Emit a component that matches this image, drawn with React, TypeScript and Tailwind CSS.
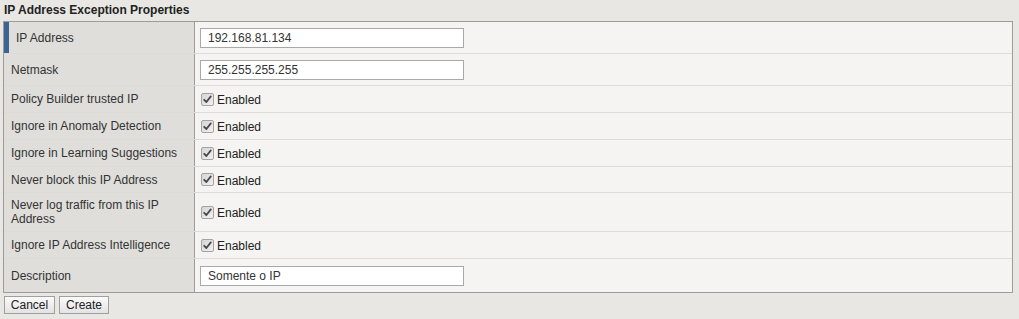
import React from 'react';

type Row = {
  label: string;
  kind: 'input' | 'check';
  value?: string;
  height: string;
  marker?: boolean;
};

const rows: Row[] = [
  { label: 'IP Address', kind: 'input', value: '192.168.81.134', height: 'h-[32px]', marker: true },
  { label: 'Netmask', kind: 'input', value: '255.255.255.255', height: 'h-[32px]' },
  { label: 'Policy Builder trusted IP', kind: 'check', height: 'h-[27px]' },
  { label: 'Ignore in Anomaly Detection', kind: 'check', height: 'h-[27px]' },
  { label: 'Ignore in Learning Suggestions', kind: 'check', height: 'h-[27px]' },
  { label: 'Never block this IP Address', kind: 'check', height: 'h-[26px]' },
  { label: 'Never log traffic from this IP Address', kind: 'check', height: 'h-[39px]' },
  { label: 'Ignore IP Address Intelligence', kind: 'check', height: 'h-[27px]' },
  { label: 'Description', kind: 'input', value: 'Somente o IP', height: 'h-[33px]' },
];

// small greyed checkbox, the way the browser paints a checked box here
const CheckBox = () => (
  <svg width="13" height="13" viewBox="0 0 13 13" className="shrink-0">
    <defs>
      <linearGradient id="cb" x1="0" y1="0" x2="1" y2="1">
        <stop offset="0" stopColor="#d4d4d4" />
        <stop offset="1" stopColor="#f2f2f2" />
      </linearGradient>
    </defs>
    <rect x="0.5" y="0.5" width="12" height="12" rx="1.5" fill="url(#cb)" stroke="#a3a3a3" />
    <path d="M3.2 6.8 L5.4 9 L9.8 3.4" fill="none" stroke="#4a4a4a" strokeWidth="1.8" strokeLinecap="round" strokeLinejoin="round" />
  </svg>
);

const App: React.FC = () => {
  return (
    <div className="min-h-[319px] w-[1019px] bg-[#e8e7e3] font-['Liberation_Sans',Arial,sans-serif] text-[12px] text-[#222]">
      <div className="px-[4px] pt-[3px] pb-[2px] h-[21px] font-bold text-[12px] leading-[15px] text-[#222]">
        IP Address Exception Properties
      </div>

      <div className="ml-[3px] w-[1010px] border border-[#9c9c9a] bg-[#f5f4f2]">
        {rows.map((row, i) => (
          <div
            key={row.label}
            className={`flex ${row.height} ${i < rows.length - 1 ? 'border-b border-[#dcdbd7]' : ''}`}
          >
            <div className="flex w-[191px] shrink-0 items-stretch border-r border-[#9c9c9a] bg-[#dfdedb]">
              {row.marker && <span className="w-[5px] shrink-0 bg-[#3a6593]" />}
              <span className="flex items-center pl-[7px] pr-[6px] leading-[14px] text-[#333]">{row.label}</span>
            </div>
            <div className="flex flex-1 items-center pl-[5px]">
              {row.kind === 'input' ? (
                <input
                  readOnly
                  value={row.value}
                  className="h-[20px] w-[264px] border border-[#a9a9a9] bg-white px-[7px] text-[12px] text-[#333] outline-none"
                />
              ) : (
                <label className="flex items-center gap-[3px] pl-[1px] text-[#222]">
                  <CheckBox />
                  <span className="pt-[2px]">Enabled</span>
                </label>
              )}
            </div>
          </div>
        ))}
      </div>

      <div className="mt-[3px] ml-[4px] flex gap-[4px]">
        <button className="h-[18px] w-[51px] border border-[#9f9f9f] bg-gradient-to-b from-[#fbfbfb] to-[#e3e3e3] text-[12px] leading-[15px] text-[#222]">
          Cancel
        </button>
        <button className="h-[18px] w-[50px] border border-[#9f9f9f] bg-gradient-to-b from-[#fbfbfb] to-[#e3e3e3] text-[12px] leading-[15px] text-[#222]">
          Create
        </button>
      </div>
    </div>
  );
};

export default App;
